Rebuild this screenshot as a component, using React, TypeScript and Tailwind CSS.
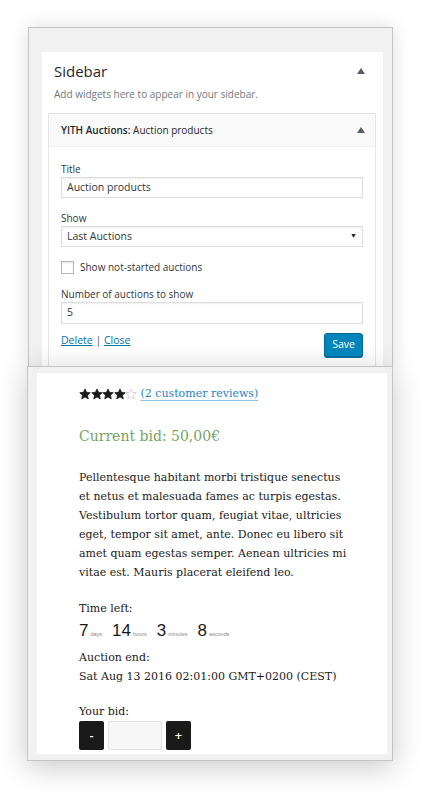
import React from 'react';

const Star = ({ filled }: { filled: boolean }) => (
  <svg width="12" height="12" viewBox="0 0 24 24" className="-mr-[0.5px]">
    <path
      d="M12 1.8l3.1 6.9 7.4.7-5.6 5 1.7 7.4L12 17.9 5.4 21.8l1.7-7.4-5.6-5 7.4-.7z"
      fill={filled ? '#1a1a1a' : 'none'}
      stroke={filled ? '#1a1a1a' : '#c8c8c8'}
      strokeWidth="1.5"
      strokeLinejoin="round"
    />
  </svg>
);

const Triangle = () => (
  <span className="block w-0 h-0 border-l-[4px] border-r-[4px] border-b-[6px] border-l-transparent border-r-transparent border-b-[#555d66]" />
);

const Field = ({ children, className = '' }: { children?: React.ReactNode; className?: string }) => (
  <div
    className={`flex items-center h-[21px] px-[5px] bg-white border border-[#dddddd] shadow-[inset_0_1px_2px_rgba(0,0,0,0.07)] text-[10.5px] text-[#32373c] ${className}`}
  >
    {children}
  </div>
);

const countdown = [
  { value: '7', label: 'days' },
  { value: '14', label: 'hours' },
  { value: '3', label: 'minutes' },
  { value: '8', label: 'seconds' },
];

export default function App() {
  return (
    <div className="w-[422px] h-[795px] overflow-hidden bg-white pt-[27px] pl-[28px]">
      {/* Widget admin panel */}
      <div
        className="w-[365px] h-[339px] bg-[#f1f1f1] border border-b-0 border-[#c4c4c4] pt-[24px] pl-[13px] pr-[9px] shadow-[0_0_18px_rgba(0,0,0,0.13)]"
        style={{ fontFamily: '"Open Sans", "Liberation Sans", sans-serif' }}
      >
        <div className="h-[315px] bg-white px-[6px] pt-[9px]">
          <div className="flex items-center justify-between pl-[6px] pr-[12px] h-[20px]">
            <h2 className="text-[15px] text-[#23282d] leading-[20px]">Sidebar</h2>
            <Triangle />
          </div>
          <p className="pl-[6px] mt-[6px] text-[10px] leading-[14px] text-[#72777c]">
            Add widgets here to appear in your sidebar.
          </p>

          <div className="mt-[12px] w-[328px] border border-[#e5e5e5]">
            <div className="flex items-center justify-between h-[33px] pl-[12px] pr-[10px] bg-[#fafafa] border-b border-[#eeeeee]">
              <span className="text-[10px] text-[#23282d] pt-[1px]">
                <span className="font-semibold">YITH Auctions:</span> Auction products
              </span>
              <Triangle />
            </div>

            <div className="px-[12px] pt-[15px] pb-[12px] text-[10px] text-[#32373c]">
              <div className="leading-[14px]">Title</div>
              <Field className="mt-[1px] h-[20px]">Auction products</Field>

              <div className="mt-[13px] leading-[14px]">Show</div>
              <Field className="mt-[1px] justify-between">
                <span>Last Auctions</span>
                <span className="text-[7px] text-[#222]">▼</span>
              </Field>

              <label className="flex items-center gap-[6px] mt-[13px] h-[14px]">
                <span className="w-[13px] h-[13px] bg-white border border-[#b4b9be] shadow-[inset_0_1px_2px_rgba(0,0,0,0.1)]" />
                <span>Show not-started auctions</span>
              </label>

              <div className="mt-[13px] leading-[14px]">Number of auctions to show</div>
              <Field className="mt-[1px] h-[22px]">5</Field>

              <div className="flex items-start justify-between mt-[9px]">
                <div className="text-[10.5px] leading-[14px]">
                  <a className="text-[#0073aa] underline">Delete</a>
                  <span className="text-[#555d66]"> | </span>
                  <a className="text-[#0073aa] underline">Close</a>
                </div>
                <button className="w-[39px] h-[24px] rounded-[3px] bg-[#0085ba] border border-[#006799] shadow-[0_1px_0_#006799] text-white text-[10.5px]">
                  Save
                </button>
              </div>
            </div>
          </div>
        </div>
      </div>

      {/* Product preview panel */}
      <div className="-ml-[1px] w-[366px] h-[395px] bg-[#f1f1f1] border border-[#c4c4c4] pl-[9px] pr-[5px] pt-[6px] pb-[6px] shadow-[0_6px_28px_rgba(0,0,0,0.22)]">
        <div
          className="h-full overflow-hidden bg-white pl-[42px] text-[#1a1a1a]"
          style={{ fontFamily: '"DejaVu Serif", "Liberation Serif", serif' }}
        >
          <div className="flex items-center gap-[4px] mt-[13px] h-[16px]">
            <div className="flex items-center">
              <Star filled />
              <Star filled />
              <Star filled />
              <Star filled />
              <Star filled={false} />
            </div>
            <a className="text-[11px] text-[#2a7fc4] underline decoration-[#8ec1e6] underline-offset-[3px]">
              (2 customer reviews)
            </a>
          </div>

          <div className="mt-[23px] text-[14px] leading-[22px] text-[#77a464]">Current bid: 50,00€</div>

          <p className="mt-[21px] w-[272px] text-[11px] leading-[19px]">
            Pellentesque habitant morbi tristique senectus et netus et malesuada fames ac turpis egestas.
            Vestibulum tortor quam, feugiat vitae, ultricies eget, tempor sit amet, ante. Donec eu libero sit
            amet quam egestas semper. Aenean ultricies mi vitae est. Mauris placerat eleifend leo.
          </p>

          <div className="mt-[17px] text-[11px] leading-[19px]">Time left:</div>
          <div
            className="flex items-baseline gap-[10px] h-[26px]"
            style={{ fontFamily: '"Liberation Sans", Arial, sans-serif' }}
          >
            {countdown.map((c) => (
              <div key={c.label} className="flex items-baseline gap-[2px]">
                <span className="text-[17px] leading-[26px] text-[#1a1a1a]">{c.value}</span>
                <span className="text-[5.5px] text-[#8a8a8a]">{c.label}</span>
              </div>
            ))}
          </div>

          <div className="mt-[4px] text-[11px] leading-[19px]">Auction end:</div>
          <div className="text-[11px] leading-[19px]">Sat Aug 13 2016 02:01:00 GMT+0200 (CEST)</div>

          <div className="mt-[16px] text-[11px] leading-[19px]">Your bid:</div>
          <div className="flex items-start gap-[4px]">
            <button className="w-[25px] h-[29px] rounded-[2px] bg-[#1a1a1a] text-white text-[10px] font-bold">-</button>
            <div className="w-[54px] h-[29px] rounded-[2px] bg-[#f7f7f7] border border-[#e3e3e3]" />
            <button className="w-[25px] h-[29px] rounded-[2px] bg-[#1a1a1a] text-white text-[10px] font-bold">+</button>
          </div>
        </div>
      </div>
    </div>
  );
}
